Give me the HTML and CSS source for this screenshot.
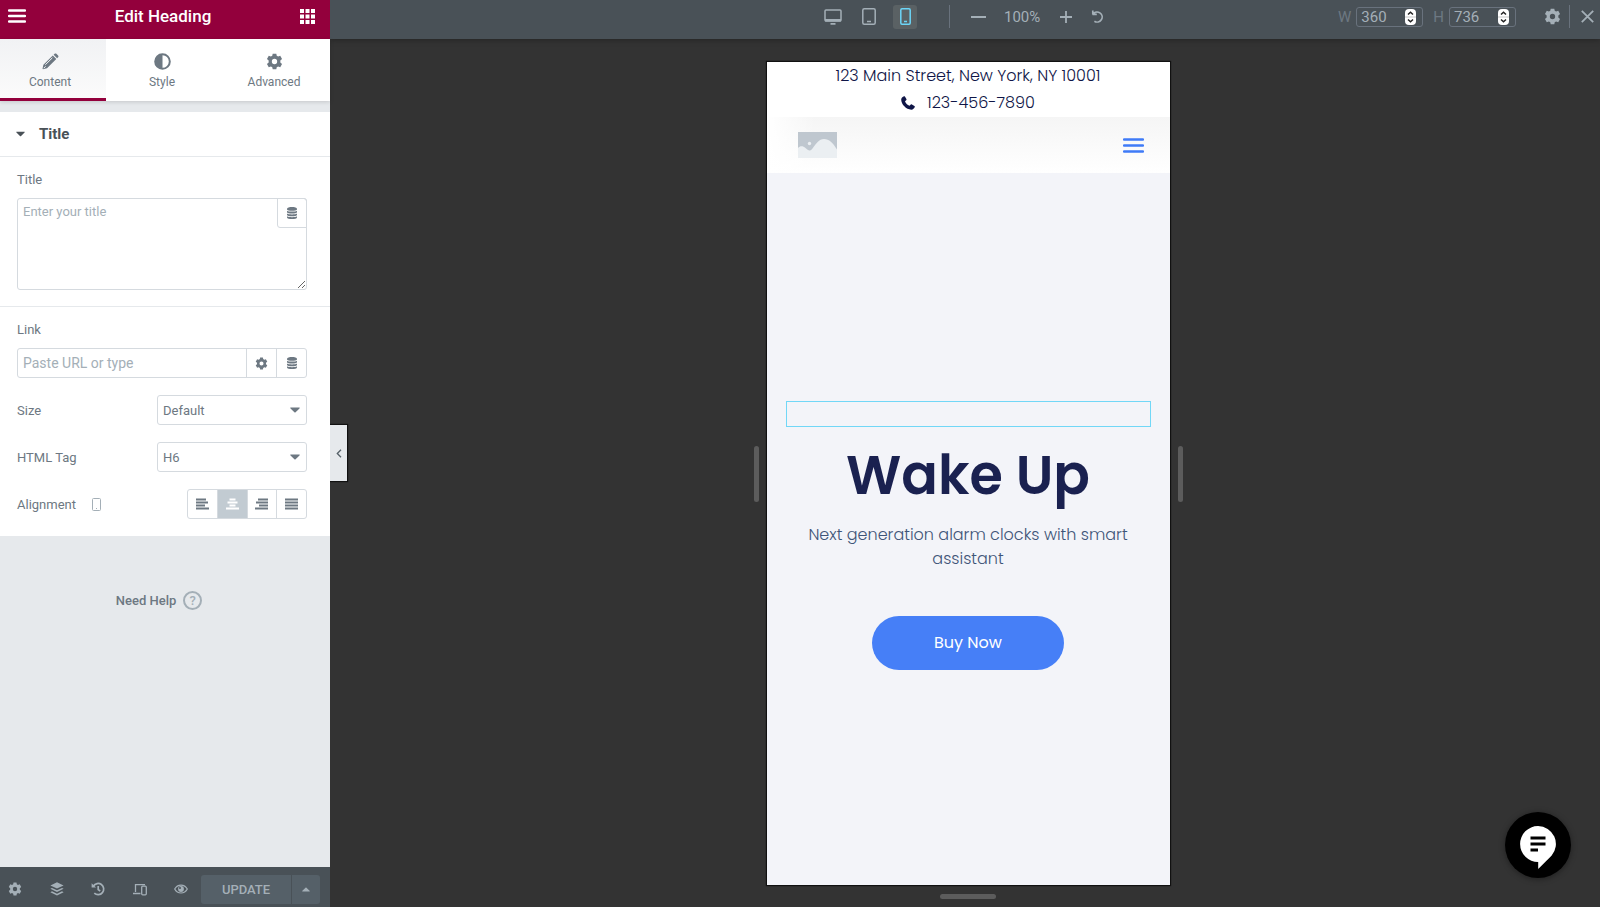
FILE: index.html
```html
<!DOCTYPE html>
<html lang="en">
<head>
    <meta charset="UTF-8">
    <meta name="viewport" content="width=device-width, initial-scale=1.0">
    <title>Edit Heading</title>
    <link rel="stylesheet" href="styles.css">
</head>
<body>
    <!-- Shared icons -->
    <svg class="sprite" aria-hidden="true">
        <symbol id="gear" viewBox="0 0 16 16">
            <path fill="currentColor" fill-rule="evenodd" d="M6.3 0.6h3.4l.4 2 1.3.8 2-.7 1.7 3-1.6 1.4v1.8l1.6 1.4-1.7 3-2-.7-1.3.8-.4 2H6.3l-.4-2-1.3-.8-2 .7-1.7-3 1.6-1.4V7.100L.9 5.700l1.700-3 2 .7 1.300-.8zM8 5.500a2.500 2.500 0 1 0 0 5 2.500 2.500 0 0 0 0-5z"/>
        </symbol>
        <symbol id="database" viewBox="0 0 12 14">
            <g fill="currentColor">
                <path d="M1 2.600C1 .4 11 .4 11 2.600v.8C11 5.200 1 5.200 1 3.400z"/>
                <path d="M1 4.700c2 1.200 8 1.200 10 0v1.500c0 1.700-10 1.700-10 0z"/>
                <path d="M1 7.500c2 1.200 8 1.200 10 0V9c0 1.700-10 1.700-10 0z"/>
                <path d="M1 10.300c2 1.200 8 1.200 10 0v1.200c0 2-10 2-10 0z"/>
            </g>
        </symbol>
        <symbol id="caret" viewBox="0 0 10 6">
            <path fill="currentColor" d="M.8.500h8.400c.6 0 .7.500.3.900L5.600 5.300c-.4.300-.8.300-1.200 0L.5 1.400C.1 1 .2.500.8.500z"/>
        </symbol>
        <symbol id="stepper" viewBox="0 0 11 16">
            <rect width="11" height="16" rx="4" fill="#fff"/>
            <path d="M0 8h11" stroke="#c8c8c8"/>
            <path d="M3 5.500l2.500-2.300L8 5.500M3 10.500l2.500 2.300L8 10.500" fill="none" stroke="#222" stroke-width="1.500"/>
        </symbol>
    </svg>

    <div class="editor">
        <!-- Panel -->
        <aside class="panel">
            <header class="panel-header">
                <button class="icon-btn" aria-label="Menu">
                    <svg width="18" height="14" viewBox="0 0 18 14"><path d="M1 1.500h16M1 7h16M1 12.500h16" stroke="currentColor" stroke-width="2.500" stroke-linecap="round"/></svg>
                </button>
                <h1>Edit Heading</h1>
                <button class="icon-btn" aria-label="Widgets">
                    <svg width="15" height="15" viewBox="0 0 15 15" fill="currentColor"><path d="M0 0h4v4H0zM5.500 0h4v4h-4zM11 0h4v4h-4zM0 5.500h4v4H0zM5.500 5.500h4v4h-4zM11 5.500h4v4h-4zM0 11h4v4H0zM5.500 11h4v4h-4zM11 11h4v4h-4z"/></svg>
                </button>
            </header>

            <nav class="tabs">
                <button class="tab active">
                    <svg width="17" height="17" viewBox="0 0 17 17"><path fill="currentColor" d="M11.600 1.800l1-1c.6-.6 1.300-.5 1.800 0l1.700 1.700c.5.500.6 1.200 0 1.800l-1 1zM10.800 2.600l3.500 3.500-9.300 9.200-4 .9-.5-.5.900-4z"/><path d="M3.600 11.500l6.500-6.400M2 14.900l1.300-1.300" stroke="#f6f7f8" stroke-width="1" stroke-linecap="round"/></svg>
                    <span>Content</span>
                </button>
                <button class="tab">
                    <svg width="17" height="17" viewBox="0 0 17 17"><circle cx="8.500" cy="8.500" r="7.300" fill="none" stroke="currentColor" stroke-width="2"/><path d="M8.500 1.500a7 7 0 0 0 0 14z" fill="currentColor"/></svg>
                    <span>Style</span>
                </button>
                <button class="tab">
                    <svg width="17" height="17"><use href="#gear"/></svg>
                    <span>Advanced</span>
                </button>
            </nav>

            <section class="section">
                <h2 class="section-title">
                    <svg width="9" height="6"><use href="#caret"/></svg>
                    Title
                </h2>

                <div class="control divided">
                    <label for="title">Title</label>
                    <div class="textarea-wrap">
                        <textarea id="title" placeholder="Enter your title"></textarea>
                        <button class="dynamic" aria-label="Dynamic tags"><svg width="12" height="14"><use href="#database"/></svg></button>
                    </div>
                </div>

                <div class="control">
                    <label for="link">Link</label>
                    <div class="input-group">
                        <input id="link" type="text" placeholder="Paste URL or type">
                        <button aria-label="Link options"><svg width="13" height="13"><use href="#gear"/></svg></button>
                        <button aria-label="Dynamic tags"><svg width="12" height="14"><use href="#database"/></svg></button>
                    </div>
                </div>

                <div class="control-row">
                    <label for="size">Size</label>
                    <div class="select-wrap">
                        <select id="size"><option>Default</option></select>
                        <svg width="10" height="6"><use href="#caret"/></svg>
                    </div>
                </div>

                <div class="control-row">
                    <label for="tag">HTML Tag</label>
                    <div class="select-wrap">
                        <select id="tag"><option>H6</option></select>
                        <svg width="10" height="6"><use href="#caret"/></svg>
                    </div>
                </div>

                <div class="control-row">
                    <span class="row-label">Alignment
                        <svg width="9" height="13" viewBox="0 0 9 13" fill="none" stroke="#a4afb7"><rect x=".5" y=".5" width="8" height="12" rx="1"/><path d="M4 10.500h1"/></svg>
                    </span>
                    <div class="align-group">
                        <button aria-label="Left"><svg width="13" height="12" viewBox="0 0 13 12"><path d="M0 1.500h10M0 4.500h12M0 7.500h9M0 10.500h13"/></svg></button>
                        <button class="active" aria-label="Center"><svg width="13" height="12" viewBox="0 0 13 12"><path d="M3.500 1.500h6M1.500 4.500h10M3.500 7.500h6M0 10.500h13"/></svg></button>
                        <button aria-label="Right"><svg width="13" height="12" viewBox="0 0 13 12"><path d="M3 1.500h10M1 4.500h12M4 7.500h9M0 10.500h13"/></svg></button>
                        <button aria-label="Justified"><svg width="13" height="12" viewBox="0 0 13 12"><path d="M0 1.500h13M0 4.500h13M0 7.500h13M0 10.500h13"/></svg></button>
                    </div>
                </div>
            </section>

            <a class="help" href="#">Need Help <span class="help-mark">?</span></a>

            <footer class="panel-footer">
                <div class="tools">
                    <button class="icon-btn" aria-label="Settings"><svg width="14" height="14"><use href="#gear"/></svg></button>
                    <button class="icon-btn" aria-label="Navigator">
                        <svg width="14" height="14" viewBox="0 0 14 14" fill="currentColor"><path d="M7 .3l6.600 3.200L7 6.600.4 3.500zM2 5.900l5 2.400 5-2.400 1.600.9L7 10 .4 6.800zM2 9.300l5 2.400 5-2.400 1.600.9L7 13.500.4 10.200z"/></svg>
                    </button>
                    <button class="icon-btn" aria-label="History">
                        <svg width="14" height="14" viewBox="0 0 14 14" fill="none" stroke="currentColor" stroke-width="1.700"><path d="M2.400 4A5.600 5.600 0 1 1 3.300 11.200M7.200 4v3.500l2 1.500"/><path d="M.6 1.200v4.400H5z" fill="currentColor" stroke="none"/></svg>
                    </button>
                    <button class="icon-btn" aria-label="Responsive mode">
                        <svg width="14" height="13" viewBox="0 0 14 13" fill="none" stroke="currentColor" stroke-width="1.300"><path d="M2.500 9V1.700h9.500M0 10.500h7.500"/><rect x="8.700" y="3.200" width="4.600" height="8.600" rx="1"/></svg>
                    </button>
                    <button class="icon-btn" aria-label="Preview">
                        <svg width="14" height="12" viewBox="0 0 14 12"><path d="M.7 6C3.500.700 10.500.700 13.300 6 10.500 11.300 3.500 11.300.7 6z" fill="none" stroke="currentColor" stroke-width="1.200"/><circle cx="7" cy="6" r="2.900" fill="currentColor"/><circle cx="6" cy="5" r="1" fill="#495157"/></svg>
                    </button>
                </div>
                <div class="publish">
                    <button class="update">UPDATE</button>
                    <button class="update-more" aria-label="Save options"><svg class="flip" width="8" height="5" viewBox="0 0 10 6"><use href="#caret"/></svg></button>
                </div>
            </footer>

            <button class="collapse" aria-label="Hide panel">
                <svg width="6" height="9" viewBox="0 0 6 9"><path d="M5 .8L1.300 4.500 5 8.200" fill="none" stroke="currentColor" stroke-width="1.300"/></svg>
            </button>
        </aside>

        <main class="workspace">
            <!-- Responsive bar -->
            <div class="topbar">
                <div class="devices">
                    <button class="icon-btn" aria-label="Desktop">
                        <svg width="18" height="16" viewBox="0 0 18 16"><rect x="1" y="1" width="16" height="11" rx="1" fill="none" stroke="currentColor" stroke-width="1.500"/><path d="M1 10h16v2.500H1zM6.500 14h5v1.700h-5z" fill="currentColor"/></svg>
                    </button>
                    <button class="icon-btn" aria-label="Tablet">
                        <svg width="14" height="17" viewBox="0 0 14 17" fill="none" stroke="currentColor" stroke-width="1.500"><rect x=".8" y=".8" width="12.400" height="15.400" rx="1.500"/><path d="M5 13.500h4"/></svg>
                    </button>
                    <button class="icon-btn active" aria-label="Mobile">
                        <svg width="11" height="17" viewBox="0 0 11 17" fill="none" stroke="currentColor" stroke-width="1.500"><rect x=".8" y=".8" width="9.400" height="15.400" rx="1.200"/><path d="M4 13.500h3"/></svg>
                    </button>
                </div>
                <span class="bar-line"></span>
                <div class="zoom">
                    <button class="icon-btn" aria-label="Zoom out"><svg width="15" height="12" viewBox="0 0 15 12"><path d="M0 6h15" stroke="currentColor" stroke-width="2"/></svg></button>
                    <span class="zoom-value">100%</span>
                    <button class="icon-btn" aria-label="Zoom in"><svg width="12" height="12" viewBox="0 0 12 12"><path d="M0 6h12M6 0v12" stroke="currentColor" stroke-width="1.800"/></svg></button>
                    <button class="icon-btn reset" aria-label="Reset zoom"><svg width="13" height="13" viewBox="0 0 13 13" fill="none" stroke="currentColor" stroke-width="1.700"><path d="M1.500 4.400H5.800M1.800.6v3.800M2 4.200A5 5 0 1 1 3.400 11.200"/></svg></button>
                </div>
                <div class="dimensions">
                    <label for="width">W</label>
                    <span class="number"><input id="width" type="number" value="360"><svg width="11" height="16"><use href="#stepper"/></svg></span>
                    <label for="height">H</label>
                    <span class="number"><input id="height" type="number" value="736"><svg width="11" height="16"><use href="#stepper"/></svg></span>
                    <button class="icon-btn bar-gear" aria-label="Breakpoints"><svg width="17" height="17"><use href="#gear"/></svg></button>
                    <span class="bar-line"></span>
                    <button class="icon-btn close" aria-label="Close"><svg width="13" height="13" viewBox="0 0 13 13"><path d="M.8.800l11.400 11.400M12.200.800L.8 12.200" stroke="currentColor" stroke-width="1.800"/></svg></button>
                </div>
            </div>

            <!-- Canvas -->
            <div class="canvas">
                <div class="stage">
                    <span class="handle side"></span>
                    <div class="phone">
                        <div class="contact">
                            <p>123 Main Street, New York, NY 10001</p>
                            <p class="call">
                                <svg width="14" height="14" viewBox="0 0 14 14"><path d="M2.600.400c.5-.3 1-.2 1.300.2L5.400 3c.3.500.2 1-.2 1.300L4 5.200c.8 2 2.200 3.500 4.500 4.600l1.100-1.100c.4-.4.800-.4 1.300-.2l2.500 1.400c.5.300.6.800.4 1.200-.7 1.500-1.900 2.700-3.500 2.600C5 13.200.400 8.500.200 3.700.100 2.200 1.300 1 2.600.400z" fill="#0f1547"/></svg>
                                123-456-7890
                            </p>
                        </div>
                        <div class="site-nav">
                            <svg width="39" height="26" viewBox="0 0 39 26"><path fill="#bfc7cf" d="M0 0h39v26H0z"/><path fill="#ebeff2" d="M0 16c2-2.500 5-2.500 7.500 0 3 3 4.500 3.500 7 .5C18 12 21 7 26 7c5 0 9 4 13 10.500V26H0z"/><circle cx="11.500" cy="11.500" r="1.700" fill="#ebeff2"/></svg>
                            <button class="icon-btn" aria-label="Open menu">
                                <svg width="21" height="15" viewBox="0 0 21 15"><path d="M1 1.500h19M1 7.500h19M1 13.500h19" stroke="#3f7bf7" stroke-width="2.500" stroke-linecap="round"/></svg>
                            </button>
                        </div>
                        <div class="hero">
                            <div class="selected"></div>
                            <h2>Wake Up</h2>
                            <p>Next generation alarm clocks with smart assistant</p>
                            <a class="buy" href="#">Buy Now</a>
                        </div>
                    </div>
                    <span class="handle side"></span>
                </div>
                <span class="handle bottom"></span>
            </div>
        </main>
    </div>

    <button class="chat" aria-label="Chat">
        <svg width="36" height="44" viewBox="0 0 36 44"><path fill="#fff" d="M18 0a18 18 0 0 1 13.500 29.800L18.200 43v-7A18 18 0 0 1 18 0z"/><path d="M10.500 12h15M10.500 18h15M10.500 24H18" stroke="#000" stroke-width="3"/></svg>
    </button>
</body>
</html>
```
FILE: styles.css
```css
* {
    box-sizing: border-box;
}
body {
    margin: 0;
    font-family: Roboto, Arial, sans-serif;
    font-size: 13px;
    color: #6d7882;
    background: #333;
}
h1, h2, p {
    margin: 0;
}
button, input, select, textarea {
    font: inherit;
    color: inherit;
}
button {
    padding: 0;
    border: none;
    background: none;
    cursor: pointer;
    display: flex;
    align-items: center;
    justify-content: center;
}
svg {
    display: block;
    flex-shrink: 0;
}
.sprite {
    display: none;
}
.editor {
    display: flex;
    height: 100vh;
}

/* Panel */
.panel {
    position: relative;
    width: 330px;
    flex-shrink: 0;
    display: flex;
    flex-direction: column;
    background: #e6e9ec;
}
.panel-header {
    height: 39px;
    padding: 0 15px 7px 8px;
    display: flex;
    align-items: center;
    justify-content: space-between;
    background: #93003c;
    color: #fff;
}
.panel-header h1 {
    font-size: 17px;
    font-weight: 500;
    line-height: 24px;
}
.tabs {
    display: grid;
    grid-template-columns: 106px 1fr 1fr;
    height: 62px;
    background: #fff;
    box-shadow: 0 1px 4px rgba(0, 0, 0, 0.15);
}
.tab {
    flex-direction: column;
    gap: 4px;
    padding-top: 3px;
    font-size: 12px;
    line-height: 16px;
}
.tab.active {
    padding-right: 6px;
    border-bottom: 3px solid #93003c;
    padding-top: 6px;
    background: linear-gradient(#f1f2f4, #fbfbfb);
}
.section {
    margin-top: 11px;
    padding-bottom: 17px;
    background: #fff;
}
.section-title {
    display: flex;
    align-items: center;
    gap: 14px;
    height: 45px;
    padding-left: 16px;
    border-bottom: 1px solid #e6e9ec;
    font-size: 15px;
    font-weight: 700;
    color: #495157;
}
.control {
    padding: 14px 23px 0 17px;
}
.control.divided {
    padding-bottom: 16px;
    border-bottom: 1px solid #e6e9ec;
}
.control label {
    display: block;
    margin-bottom: 9px;
    line-height: 18px;
}
.textarea-wrap {
    position: relative;
    height: 92px;
}
.textarea-wrap textarea {
    display: block;
    width: 100%;
    height: 92px;
    padding: 5px;
    line-height: 16px;
    border: 1px solid #d5dadf;
    border-radius: 3px;
}
::placeholder {
    color: #a4afb7;
}
.dynamic {
    position: absolute;
    top: 0;
    right: 0;
    width: 30px;
    height: 30px;
    border: 1px solid #d5dadf;
    border-radius: 0 3px 0 3px;
}
.input-group {
    display: flex;
    height: 30px;
    border: 1px solid #d5dadf;
    border-radius: 3px;
}
.input-group input {
    flex: 1;
    min-width: 0;
    padding: 0 5px;
    border: none;
    background: none;
    font-size: 14px;
}
.input-group button {
    width: 30px;
    border-left: 1px solid #d5dadf;
}
.control-row {
    display: flex;
    align-items: center;
    justify-content: space-between;
    margin-top: 17px;
    padding: 0 23px 0 17px;
}
.select-wrap {
    position: relative;
    width: 150px;
}
.select-wrap select {
    display: block;
    width: 100%;
    height: 30px;
    padding: 0 5px;
    border: 1px solid #d5dadf;
    border-radius: 3px;
    background: #fff;
    appearance: none;
}
.select-wrap svg {
    position: absolute;
    right: 7px;
    top: 12px;
    pointer-events: none;
}
.row-label {
    display: flex;
    align-items: center;
    gap: 16px;
}
.align-group {
    display: flex;
    width: 120px;
    height: 30px;
    border: 1px solid #d5dadf;
    border-radius: 3px;
}
.align-group button {
    flex: 1;
    border-left: 1px solid #d5dadf;
}
.align-group button:first-child {
    border-left: none;
}
.align-group button.active {
    background: #c2cbd2;
    color: #fff;
}
.align-group path {
    stroke: currentColor;
    stroke-width: 2;
}
.help {
    display: flex;
    align-items: center;
    justify-content: center;
    gap: 7px;
    margin-top: 55px;
    padding-right: 12px;
    font-weight: 500;
    color: #6d7882;
    text-decoration: none;
}
.help-mark {
    width: 19px;
    height: 19px;
    border: 2px solid #a4afb7;
    border-radius: 50%;
    line-height: 15px;
    text-align: center;
    color: #a4afb7;
}
.panel-footer {
    display: flex;
    align-items: center;
    justify-content: space-between;
    height: 40px;
    margin-top: auto;
    padding: 4px 10px 0 6px;
    background: #495157;
    color: #a4afb7;
}
.tools {
    display: flex;
    justify-content: space-between;
    width: 184px;
}
.tools .icon-btn {
    width: 18px;
    height: 24px;
}
.publish {
    display: flex;
    height: 29px;
    gap: 1px;
}
.update, .update-more {
    background: #556068;
}
.update {
    width: 90px;
    border-radius: 3px 0 0 3px;
    font-weight: 500;
}
.update-more {
    width: 28px;
    border-radius: 0 3px 3px 0;
}
.flip {
    transform: rotate(180deg);
}
.collapse {
    position: absolute;
    left: 100%;
    top: 425px;
    width: 17px;
    height: 56px;
    background: #e6e9ec;
    box-shadow: 0 0 1px 1px #111;
    clip-path: inset(-2px -2px -2px 0);
    color: #556068;
}

/* Responsive bar */
.workspace {
    flex: 1;
    min-width: 0;
    display: flex;
    flex-direction: column;
}
.topbar {
    display: grid;
    grid-template-columns: 1fr auto auto auto 1fr;
    align-items: center;
    height: 39px;
    padding-bottom: 6px;
    background: #495157;
    color: #a4afb7;
    box-shadow: 0 1px 6px rgba(0, 0, 0, 0.3);
}
.devices {
    grid-column: 2;
    display: flex;
    gap: 12px;
}
.topbar .icon-btn {
    width: 24px;
    height: 24px;
}
.topbar .icon-btn.active {
    background: #5a6164;
    border-radius: 3px;
    color: #6cd5f7;
}
.bar-line {
    width: 1px;
    height: 23px;
    background: #69727d;
}
.topbar > .bar-line {
    margin: 0 16px 0 32px;
}
.zoom {
    display: flex;
    align-items: center;
}
.zoom-value {
    width: 36px;
    margin: 0 14px;
    font-size: 15px;
    text-align: center;
}
.zoom .reset {
    margin-left: 7px;
}
.dimensions {
    display: flex;
    align-items: center;
    justify-content: flex-end;
    font-size: 15px;
}
.dimensions label {
    margin-right: 5px;
    color: #6d7882;
}
.number {
    position: relative;
    margin-right: 10px;
}
.number input {
    display: block;
    width: 67px;
    height: 20px;
    padding: 0 4px;
    border: 1px solid #69727d;
    border-radius: 3px;
    background: none;
    appearance: textfield;
}
.number input::-webkit-inner-spin-button {
    display: none;
}
.number svg {
    position: absolute;
    top: 2px;
    right: 7px;
}
.topbar .bar-gear {
    margin: 0 5px 0 14px;
}
.topbar .close {
    margin: 0 1px 0 5px;
}

/* Canvas */
.canvas {
    flex: 1;
    min-height: 0;
    display: flex;
    flex-direction: column;
    align-items: center;
    gap: 9px;
    padding: 23px 0 8px 6px;
}
.stage {
    flex: 1;
    min-height: 0;
    display: flex;
    align-items: center;
    gap: 8px;
}
.handle {
    border-radius: 3px;
    background: #5c5c5c;
}
.handle.side {
    width: 5px;
    height: 56px;
}
.handle.bottom {
    width: 56px;
    height: 5px;
}
.phone {
    display: flex;
    flex-direction: column;
    width: 403px;
    height: 100%;
    background: #f3f4f9;
    box-shadow: 0 0 1px 1px #111;
    font-family: Poppins, Inter, sans-serif;
}
.contact {
    padding-bottom: 1px;
    background: #fff;
    font-size: 16px;
    font-weight: 300;
    line-height: 27px;
    text-align: center;
    color: #0f1547;
}
.call {
    display: flex;
    align-items: center;
    justify-content: center;
    gap: 12px;
}
.site-nav {
    display: flex;
    align-items: center;
    justify-content: space-between;
    height: 56px;
    padding: 0 26px 0 31px;
    background: linear-gradient(to right, #fff, rgba(255, 255, 255, 0) 12%), linear-gradient(#f5f5f5, #fff);
}
.hero {
    flex: 1;
    display: flex;
    flex-direction: column;
    align-items: center;
    justify-content: center;
    padding: 13px 19px 0;
    text-align: center;
}
.selected {
    width: 100%;
    height: 26px;
    border: 1px solid #71d7f7;
}
.hero h2 {
    margin-top: 20px;
    font-size: 54px;
    font-weight: 600;
    line-height: 56px;
    color: #1a2150;
}
.hero p {
    margin-top: 20px;
    font-size: 16px;
    font-weight: 300;
    line-height: 24px;
    color: #3f5578;
    max-width: 340px;
}
.buy {
    margin-top: 45px;
    width: 192px;
    border-radius: 27px;
    background: #467ff7;
    color: #fff;
    font-size: 16px;
    line-height: 54px;
    text-decoration: none;
}
.chat {
    position: fixed;
    right: 29px;
    bottom: 29px;
    width: 66px;
    height: 66px;
    padding-top: 6px;
    border-radius: 50%;
    background: #000;
    box-shadow: 0 1px 6px rgba(0, 0, 0, 0.4);
}
```
